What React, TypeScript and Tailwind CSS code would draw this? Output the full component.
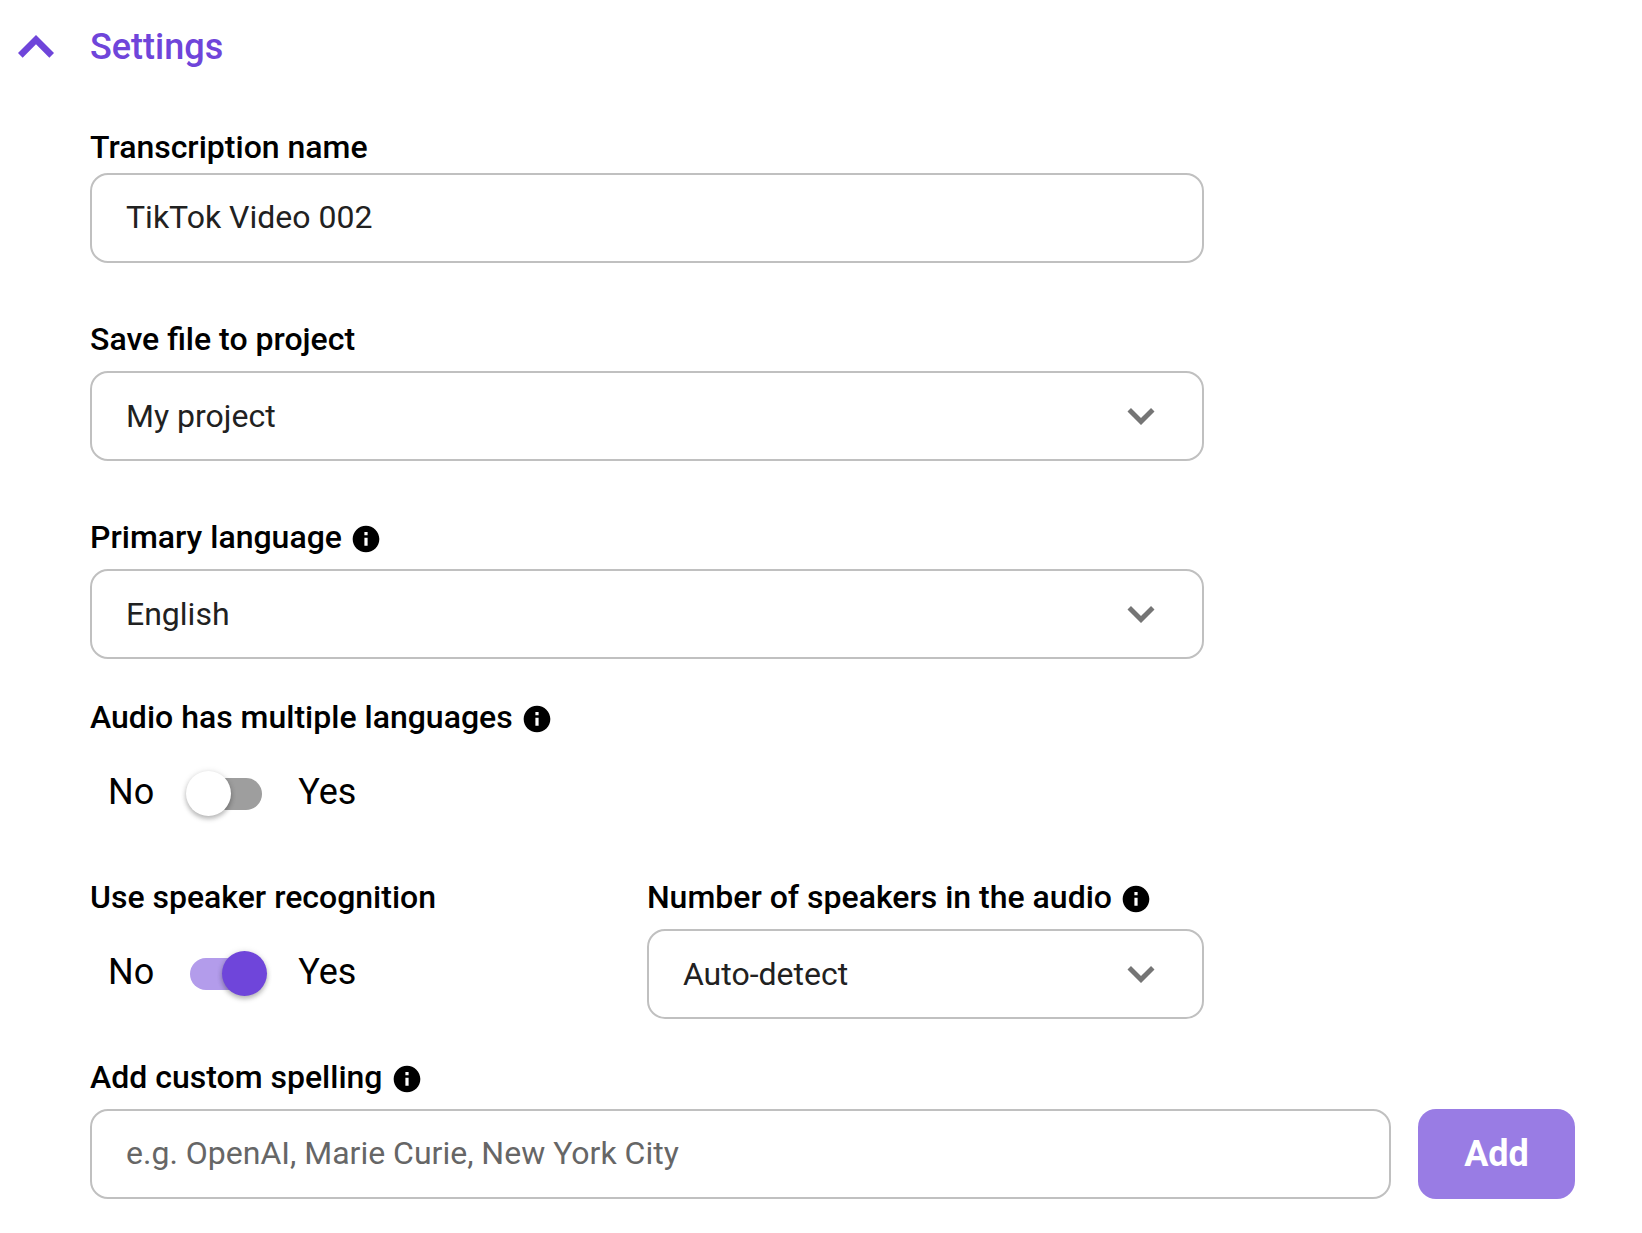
import { useState, type ReactNode } from "react";

const fieldClass =
  "h-[90px] w-full rounded-[18px] border-2 border-[#c0c0c0] bg-white px-[34px] text-[32px] leading-10 text-[#212121] outline-none focus:border-[#6f45da]";

export default function App() {
  const [open, setOpen] = useState(true);

  return (
    <main className="bg-white pt-[11px] pr-[67px] pb-[34px] font-[Roboto,sans-serif] text-black">
      <h2>
        <button
          type="button"
          aria-expanded={open}
          onClick={() => setOpen(!open)}
          className="flex items-center gap-[18px] text-4xl leading-10 font-medium text-[#6f45da]"
        >
          <svg viewBox="0 0 24 24" className="size-[72px]" fill="currentColor" aria-hidden="true">
            <path d="M12 8l-6 6 1.55 1.55L12 11.1l4.45 4.45L18 14z" />
          </svg>
          Settings
        </button>
      </h2>

      {open && (
        <form className="flex flex-col gap-[38px] pt-11 pl-[90px]" onSubmit={(e) => e.preventDefault()}>
          <div className="flex w-3/4 flex-col gap-14">
            <div className="flex flex-col gap-1.5">
              <FieldLabel htmlFor="name">Transcription name</FieldLabel>
              <input id="name" type="text" defaultValue="TikTok Video 002" className={`${fieldClass} pb-0.5`} />
            </div>
            <SelectField id="project" label="Save file to project" options={["My project"]} />
            <SelectField id="language" label="Primary language" options={["English"]} info />
          </div>

          <Toggle id="multiple" label="Audio has multiple languages" info />

          <div className="grid w-3/4 grid-cols-2">
            <Toggle id="speakers" label="Use speaker recognition" defaultChecked />
            <SelectField id="count" label="Number of speakers in the audio" options={["Auto-detect"]} info />
          </div>

          <div className="flex flex-col gap-3">
            <FieldLabel htmlFor="spelling" info>
              Add custom spelling
            </FieldLabel>
            <div className="flex gap-[27px]">
              <input
                id="spelling"
                type="text"
                placeholder="e.g. OpenAI, Marie Curie, New York City"
                className={`${fieldClass} min-w-0 flex-1 pb-0.5 placeholder:text-[#666666]`}
              />
              <button
                type="submit"
                className="w-[157px] rounded-[18px] bg-[#997ce4] text-4xl leading-10 font-bold text-white"
              >
                Add
              </button>
            </div>
          </div>
        </form>
      )}
    </main>
  );
}

function FieldLabel({ htmlFor, info, children }: { htmlFor: string; info?: boolean; children: ReactNode }) {
  return (
    <div className="flex items-center gap-2">
      <label htmlFor={htmlFor} className="text-[32px] leading-10 font-medium">
        {children}
      </label>
      {info && (
        <svg viewBox="0 0 24 24" className="mt-1 size-8" fill="currentColor" aria-hidden="true">
          <path d="M12 2C6.48 2 2 6.48 2 12s4.48 10 10 10 10-4.48 10-10S17.52 2 12 2zm1.2 15h-2.4v-6h2.4v6zm0-7.8h-2.4V6.8h2.4v2.4z" />
        </svg>
      )}
    </div>
  );
}

type SelectFieldProps = { id: string; label: string; options: string[]; info?: boolean };

function SelectField({ id, label, options, info }: SelectFieldProps) {
  return (
    <div className="flex flex-col gap-3">
      <FieldLabel htmlFor={id} info={info}>
        {label}
      </FieldLabel>
      <div className="relative">
        <select id={id} className={`${fieldClass} appearance-none`}>
          {options.map((option) => (
            <option key={option}>{option}</option>
          ))}
        </select>
        <svg
          viewBox="0 0 24 24"
          className="pointer-events-none absolute inset-y-0 right-9 my-auto size-[54px] text-[#757575]"
          fill="currentColor"
          aria-hidden="true"
        >
          <path d="M16.45 8.45L12 12.9 7.55 8.45 6 10l6 6 6-6z" />
        </svg>
      </div>
    </div>
  );
}

type ToggleProps = { id: string; label: string; info?: boolean; defaultChecked?: boolean };

function Toggle({ id, label, info, defaultChecked }: ToggleProps) {
  return (
    <div className="flex flex-col gap-3">
      <FieldLabel htmlFor={id} info={info}>
        {label}
      </FieldLabel>
      <div className="flex h-[90px] items-center gap-9 pl-[18px] text-4xl leading-10">
        <span className="pb-1">No</span>
        <input
          id={id}
          type="checkbox"
          role="switch"
          defaultChecked={defaultChecked}
          className="relative h-8 w-[72px] appearance-none rounded-full bg-[#9e9e9e] before:absolute before:-top-[7px] before:-left-1 before:size-[45px] before:rounded-full before:bg-white before:shadow-[0_3px_5px_rgba(0,0,0,0.25),0_0_6px_rgba(0,0,0,0.1)] checked:bg-[#b39ceb] checked:before:left-8 checked:before:bg-[#6f45da]"
        />
        <span className="pb-1">Yes</span>
      </div>
    </div>
  );
}
